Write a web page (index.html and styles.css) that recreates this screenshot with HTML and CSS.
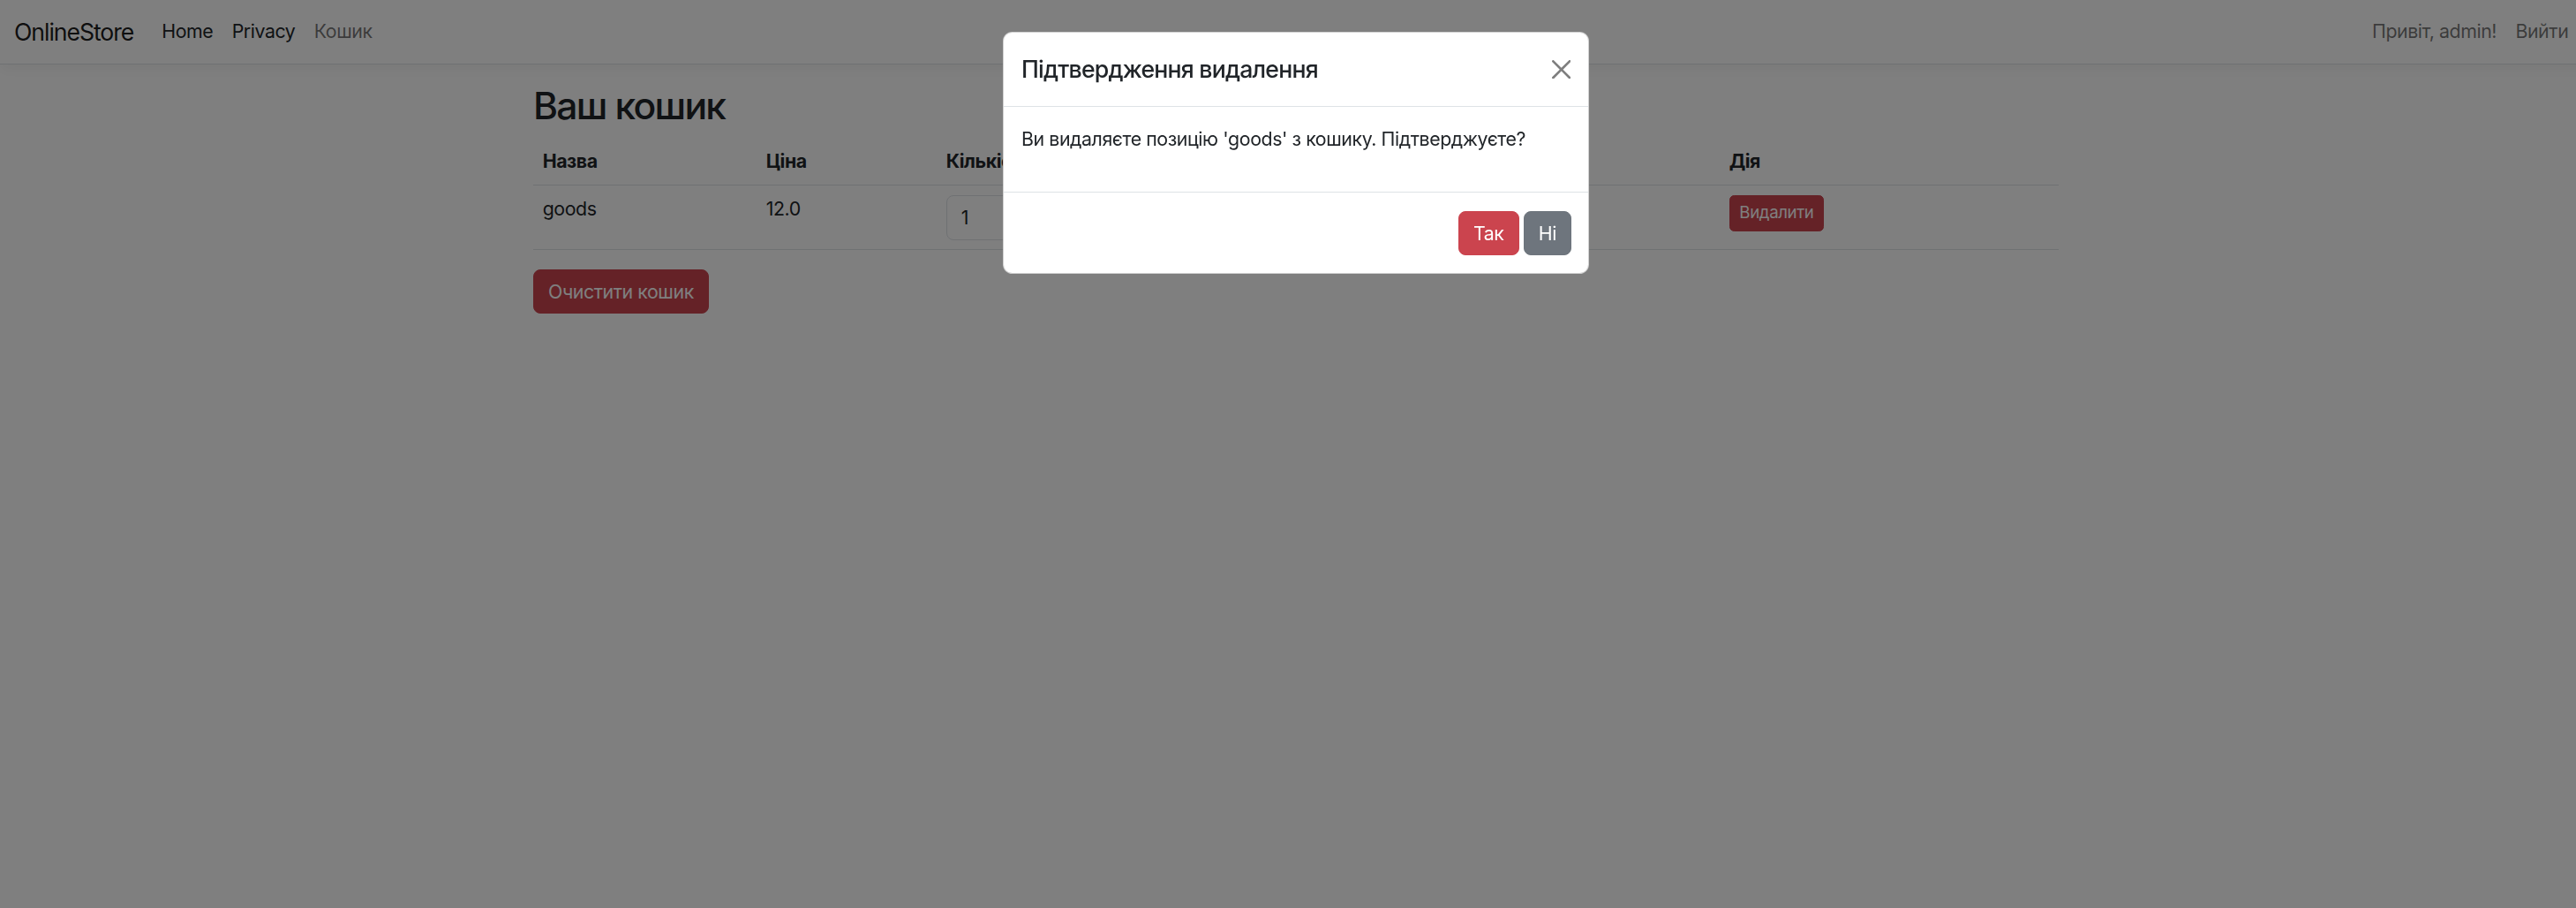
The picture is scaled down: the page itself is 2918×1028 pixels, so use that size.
FILE: index.html
```html
<!DOCTYPE html>
<html lang="uk">
<head>
<meta charset="utf-8">
<title>Кошик - OnlineStore</title>
<link rel="stylesheet" href="styles.css">
</head>
<body>
<div class="page">
  <header class="navbar">
    <a class="brand" href="#">OnlineStore</a>
    <ul class="nav">
      <li><a class="nav-link dark" href="#">Home</a></li>
      <li><a class="nav-link dark" href="#">Privacy</a></li>
      <li><a class="nav-link" href="#">Кошик</a></li>
    </ul>
    <div class="nav-right">
      <span class="nav-text">Привіт, admin!</span>
      <a class="nav-link" href="#">Вийти</a>
    </div>
  </header>
  <main class="container">
    <h2 class="title">Ваш кошик</h2>
    <table class="cart">
      <colgroup>
        <col class="c-name"><col class="c-price"><col class="c-qty"><col class="c-sum"><col class="c-act">
      </colgroup>
      <thead>
        <tr><th>Назва</th><th>Ціна</th><th>Кількість</th><th>Сума</th><th>Дія</th></tr>
      </thead>
      <tbody>
        <tr>
          <td>goods</td>
          <td>12.0</td>
          <td><input class="qty" type="number" value="1"></td>
          <td>12.0</td>
          <td><button class="btn btn-danger btn-sm">Видалити</button></td>
        </tr>
      </tbody>
    </table>
    <button class="btn btn-danger">Очистити кошик</button>
  </main>
</div>
<div class="backdrop"></div>
<div class="modal">
  <div class="modal-content">
    <div class="modal-header">
      <h5 class="modal-title">Підтвердження видалення</h5>
      <button class="btn-close" aria-label="Close">
        <svg viewBox="0 0 16 16" width="21.33" height="21.33"><path d="M.293.293a1 1 0 0 1 1.414 0L8 6.586 14.293.293a1 1 0 1 1 1.414 1.414L9.414 8l6.293 6.293a1 1 0 0 1-1.414 1.414L8 9.414l-6.293 6.293a1 1 0 0 1-1.414-1.414L6.586 8 .293 1.707a1 1 0 0 1 0-1.414z"/></svg>
      </button>
    </div>
    <div class="modal-body">
      <p>Ви видаляєте позицію 'goods' з кошику. Підтверджуєте?</p>
    </div>
    <div class="modal-footer">
      <button class="btn btn-danger">Так</button>
      <button class="btn btn-secondary">Ні</button>
    </div>
  </div>
</div>
</body>
</html>
```

FILE: styles.css
```css
* { box-sizing: border-box; }

html, body {
  margin: 0;
  padding: 0;
  overflow: hidden;
}

body {
  font-family: Inter, "Noto Sans", "Liberation Sans", sans-serif;
  font-size: 21.333px;
  line-height: 1.5;
  letter-spacing: -0.02em;
  color: #212529;
  background: #fff;
  width: 2918px;
  height: 1028px;
}

.page {
  width: 2936px;
}

a { text-decoration: none; }

/* navbar */
.navbar {
  display: flex;
  align-items: center;
  height: 73px;
  padding: 0 16px;
  background: #fff;
  border-bottom: 1px solid #dee2e6;
  box-shadow: 0 5px 16px rgba(0, 0, 0, 0.05);
  margin-bottom: 21.333px;
}

.brand {
  font-size: 26.667px;
  line-height: 40px;
  letter-spacing: -0.04em;
  color: rgba(0, 0, 0, 0.9);
  margin-right: 21.333px;
}

.nav {
  display: flex;
  list-style: none;
  margin: 0;
  padding: 0;
  flex: 1;
}

.nav-link {
  display: block;
  padding: 10.667px;
  color: rgba(0, 0, 0, 0.55);
}

.nav-link.dark { color: #212529; }

.nav-right {
  display: flex;
  align-items: center;
}

.nav-text {
  color: rgba(0, 0, 0, 0.55);
  margin-right: 10.667px;
}

/* content */
.container {
  max-width: 1760px;
  margin: 0 auto;
  padding: 0 16px;
}

.title {
  font-size: 42.667px;
  font-weight: 500;
  line-height: 1.2;
  letter-spacing: -0.04em;
  margin: 0 0 10.667px;
}

.cart {
  width: 100%;
  border-collapse: collapse;
  margin-bottom: 21.333px;
  vertical-align: top;
}

.c-name { width: 253px; }
.c-price { width: 204px; }
.c-qty { width: 444px; }
.c-sum { width: 443px; }
.c-act { width: 384px; }

.cart th, .cart td {
  padding: 10.667px;
  border-bottom: 1px solid #dee2e6;
  text-align: left;
}

.cart th {
  font-weight: 700;
  vertical-align: bottom;
}

.cart td { vertical-align: top; }

.qty {
  display: block;
  width: 120px;
  height: 50.667px;
  padding: 8px 16px;
  font: inherit;
  color: #212529;
  border: 1px solid #dee2e6;
  border-radius: 8px;
  background: #fff;
}

.btn {
  display: inline-block;
  font-family: inherit;
  font-size: 21.333px;
  line-height: 32px;
  letter-spacing: -0.02em;
  padding: 8px 16px;
  border: 1px solid transparent;
  border-radius: 8px;
  color: #fff;
  cursor: pointer;
}

.btn-sm {
  font-size: 18.667px;
  line-height: 28px;
  padding: 5.333px 10.667px;
  border-radius: 5.333px;
}

.btn-danger {
  background: #cb444e;
  border-color: #cb444e;
}

.btn-secondary {
  background: #6e757d;
  border-color: #6e757d;
}

/* modal */
.backdrop {
  position: fixed;
  inset: 0;
  background: rgba(0, 0, 0, 0.5);
}

.modal {
  position: fixed;
  top: 0;
  left: 0;
  width: 2936px;
  height: 100%;
  padding-top: 36px;
}

.modal-content {
  width: 664px;
  margin: 0 auto;
  background: #fff;
  border: 1px solid rgba(0, 0, 0, 0.175);
  border-radius: 10.667px;
  overflow: hidden;
}

.modal-header {
  display: flex;
  align-items: center;
  padding: 21.333px 21.333px 21.333px 20px;
  border-bottom: 1px solid #dee2e6;
}

.modal-title {
  margin: 0;
  flex: 1;
  font-size: 26.667px;
  font-weight: 500;
  line-height: 40px;
  letter-spacing: -0.03em;
}

.btn-close {
  display: block;
  width: 32px;
  height: 32px;
  padding: 5.333px;
  margin: -10px -6.667px -10px auto;
  border: 0;
  background: transparent;
  opacity: 0.5;
  cursor: pointer;
}

.btn-close svg { display: block; fill: #000; }

.modal-body {
  padding: 21.333px 21.333px 21.333px 20px;
}

.modal-body p {
  margin: 0 0 21.333px;
}

.modal-footer {
  display: flex;
  justify-content: flex-end;
  gap: 5.333px;
  padding: 21.333px 19px 20px;
  border-top: 1px solid #dee2e6;
}
```
